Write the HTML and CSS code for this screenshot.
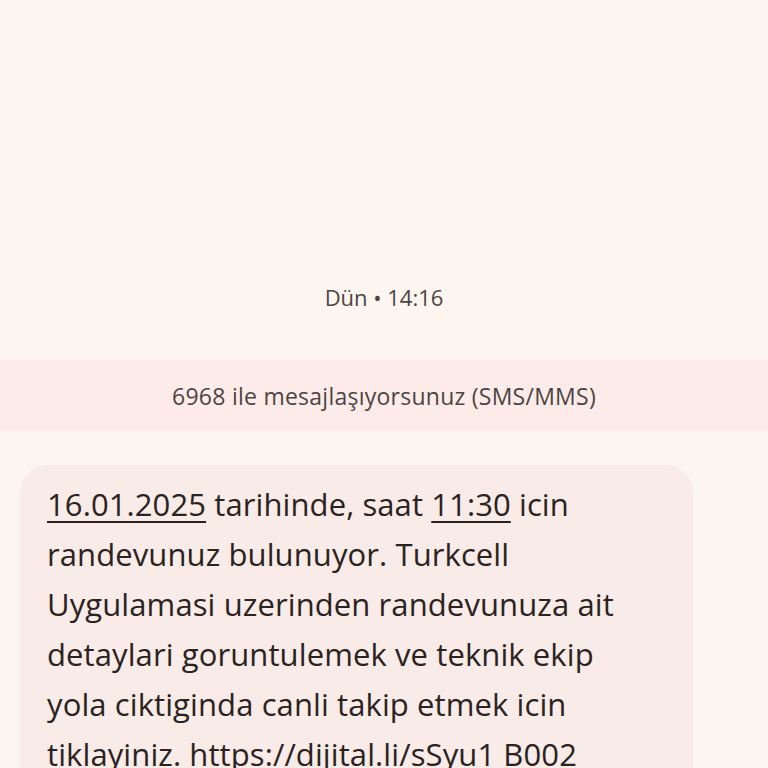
FILE: index.html
```html
<!DOCTYPE html>
<html lang="tr">
<head>
    <meta charset="UTF-8">
    <meta name="viewport" content="width=device-width, initial-scale=1.0">
    <title>6968</title>
    <link rel="stylesheet" href="styles.css">
</head>
<body>
    <div class="conversation">
        <p class="timestamp">Dün • 14:16</p>

        <!-- Protocol notice -->
        <div class="notice">
            <p>6968 ile mesajlaşıyorsunuz (SMS/MMS)</p>
        </div>

        <div class="message-row">
            <div class="bubble">
                <span class="link">16.01.2025</span> tarihinde, saat <span class="link">11:30</span> icin<br>
                randevunuz bulunuyor. Turkcell<br>
                Uygulamasi uzerinden randevunuza ait<br>
                detaylari goruntulemek ve teknik ekip<br>
                yola ciktiginda canli takip etmek icin<br>
                tiklayiniz. https://dijital.li/sSyu1 B002
            </div>
        </div>
    </div>
</body>
</html>
```

FILE: styles.css
```css
body {
    margin: 0;
    background-color: #fdf5f0;
    font-family: "Open Sans", "Noto Sans", sans-serif;
    color: #2b2321;
    overflow: hidden;
}
.conversation {
    display: flex;
    flex-direction: column;
    padding-top: 283px;
}
.timestamp {
    margin: 0;
    text-align: center;
    font-size: 22px;
    line-height: 28px;
    color: #4d4543;
}
.notice {
    margin-top: 49px;
    background-color: #fcebe8;
    height: 71px;
    display: flex;
    align-items: center;
    justify-content: center;
}
.notice p {
    margin: 0;
    font-size: 23px;
    letter-spacing: 0.25px;
    color: #4d4543;
}
.message-row {
    padding: 34px 0 0 20px;
}
.bubble {
    width: 620px;
    background-color: #f9ebe7;
    border-radius: 28px;
    padding: 14px 26px 20px 27px;
    font-size: 31px;
    line-height: 50px;
    letter-spacing: 0.1px;
    white-space: nowrap;
}
.link {
    text-decoration: underline;
    text-decoration-thickness: 2px;
    text-underline-offset: 5px;
}
```
